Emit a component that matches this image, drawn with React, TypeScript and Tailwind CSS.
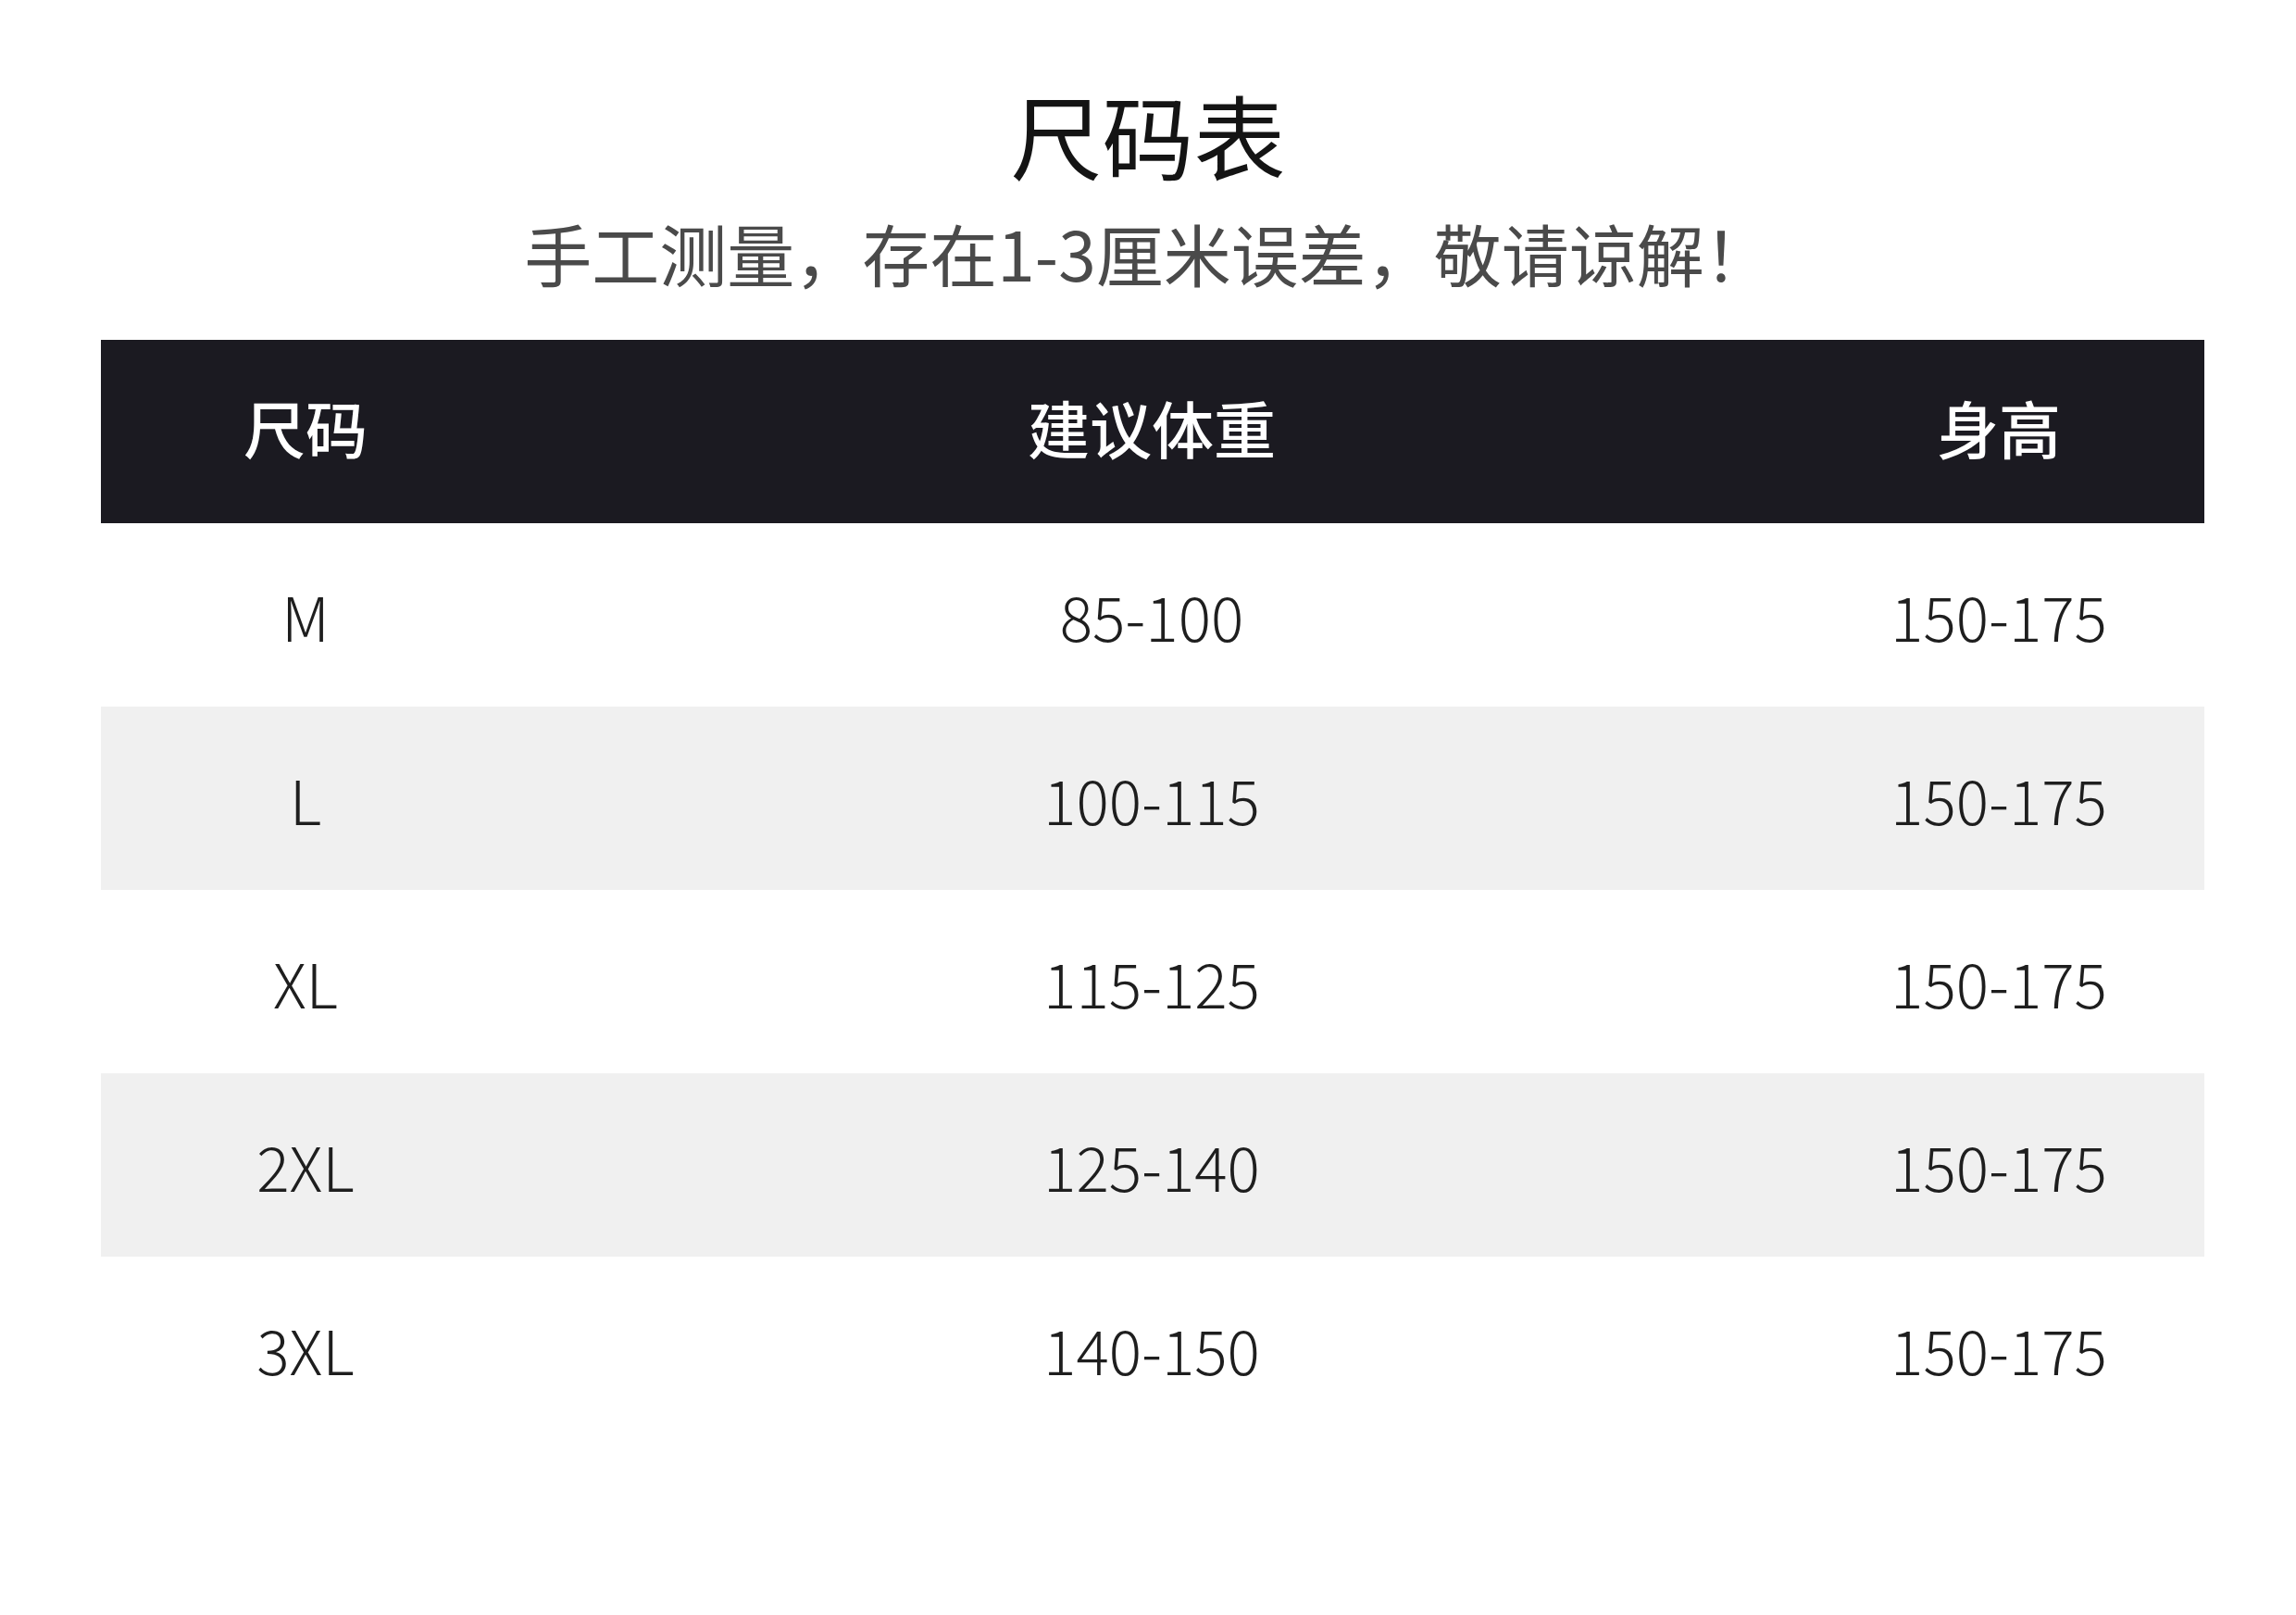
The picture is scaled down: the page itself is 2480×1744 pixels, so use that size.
import React from "react";

const rows = [
  { size: "M", weight: "85-100", height: "150-175" },
  { size: "L", weight: "100-115", height: "150-175" },
  { size: "XL", weight: "115-125", height: "150-175" },
  { size: "2XL", weight: "125-140", height: "150-175" },
  { size: "3XL", weight: "140-150", height: "150-175" },
];

export default function App() {
  return (
    <div
      className="w-[2480px] h-[1744px] bg-white flex flex-col items-center pt-[95px]"
      style={{ fontFamily: '"Noto Sans CJK SC", "Noto Sans", sans-serif' }}
    >
      <h1 className="text-[99px] leading-none h-[99px] text-[#141414] font-normal">尺码表</h1>
      <p className="mt-[42px] text-[73px] leading-none h-[73px] text-[#4a4a4a]">
        手工测量，存在1-3厘米误差，敬请谅解！
      </p>
      <div className="mt-[58px] w-[2272px] self-start ml-[109px] flex flex-col">
        <div className="grid grid-cols-[442px_1fr_444px] h-[198px] pb-[10px] bg-[#1b1a21] items-center text-white text-[67px] font-medium">
          <div className="text-center">尺码</div>
          <div className="text-center">建议体重</div>
          <div className="text-center">身高</div>
        </div>
        {rows.map((r, i) => (
          <div
            key={r.size}
            className={
              "grid grid-cols-[442px_1fr_444px] h-[198px] items-center text-[66px] font-light text-[#1e1e1e] " +
              (i % 2 === 1 ? "bg-[#f0f0f0]" : "bg-white")
            }
          >
            <div className="text-center">{r.size}</div>
            <div className="text-center">{r.weight}</div>
            <div className="text-center">{r.height}</div>
          </div>
        ))}
      </div>
    </div>
  );
}
